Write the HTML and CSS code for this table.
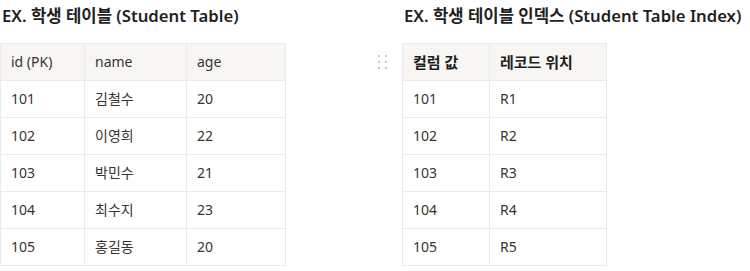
FILE: index.html
```html
<!DOCTYPE html>
<html lang="ko">
<head>
<meta charset="utf-8">
<link rel="stylesheet" href="styles.css">
</head>
<body>
<div class="page">
  <section class="block block-left">
    <h3 class="title">EX. 학생 테이블 (Student Table)</h3>
    <div class="table-wrap">
      <table class="tbl tbl-left">
        <colgroup><col class="c1"><col class="c2"><col class="c3"></colgroup>
        <thead><tr><th>id (PK)</th><th>name</th><th>age</th></tr></thead>
        <tbody>
          <tr><td>101</td><td>김철수</td><td>20</td></tr>
          <tr><td>102</td><td>이영희</td><td>22</td></tr>
          <tr><td>103</td><td>박민수</td><td>21</td></tr>
          <tr><td>104</td><td>최수지</td><td>23</td></tr>
          <tr><td>105</td><td>홍길동</td><td>20</td></tr>
        </tbody>
      </table>
    </div>
  </section>
  <section class="block block-right">
    <h3 class="title">EX. 학생 테이블 인덱스 (Student Table Index)</h3>
    <div class="table-wrap">
      <span class="handle" aria-hidden="true"><i></i><i></i><i></i><i></i><i></i><i></i></span>
      <table class="tbl tbl-right">
        <colgroup><col class="d1"><col class="d2"></colgroup>
        <thead><tr><th>컬럼 값</th><th>레코드 위치</th></tr></thead>
        <tbody>
          <tr><td>101</td><td>R1</td></tr>
          <tr><td>102</td><td>R2</td></tr>
          <tr><td>103</td><td>R3</td></tr>
          <tr><td>104</td><td>R4</td></tr>
          <tr><td>105</td><td>R5</td></tr>
        </tbody>
      </table>
    </div>
  </section>
</div>
</body>
</html>
```
FILE: styles.css
```css
html, body {
  margin: 0;
  padding: 0;
  background: #ffffff;
}
body {
  font-family: "Noto Sans", "Noto Sans CJK KR", sans-serif;
  color: #37352f;
}
.page {
  display: flex;
  align-items: flex-start;
  padding-top: 4px;
}
.block {
  display: flex;
  flex-direction: column;
}
.block-left {
  width: 285px;
}
.block-right {
  margin-left: 117px;
}
.title {
  margin: 0 0 15px 0;
  padding-left: 2px;
  font-size: 16.7px;
  line-height: 24px;
  font-weight: 600;
  color: #1f1f1f;
  white-space: nowrap;
}
.block-right .title {
  padding-left: 2px;
}
.table-wrap {
  position: relative;
}
.tbl {
  border-collapse: collapse;
  table-layout: fixed;
  font-size: 14px;
}
.tbl-left { width: 285px; }
.tbl-right { width: 204px; }
.c1 { width: 84px; }
.c2 { width: 102px; }
.c3 { width: 99px; }
.d1 { width: 87px; }
.d2 { width: 117px; }
.tbl th, .tbl td {
  border: 1px solid #ebebe9;
  padding: 8px 10px;
  line-height: 20px;
  text-align: left;
  white-space: nowrap;
  color: #37352f;
}
.tbl th {
  background: #f7f6f3;
  font-weight: 400;
}
.tbl-right th {
  font-weight: 700;
  font-size: 15px;
  color: #1f1f1f;
}
.handle {
  position: absolute;
  left: -24px;
  top: 12px;
  display: grid;
  grid-template-columns: 2px 2px;
  column-gap: 5px;
  row-gap: 4px;
}
.handle i {
  display: block;
  width: 2px;
  height: 2px;
  background: #c9c9c7;
}
```
